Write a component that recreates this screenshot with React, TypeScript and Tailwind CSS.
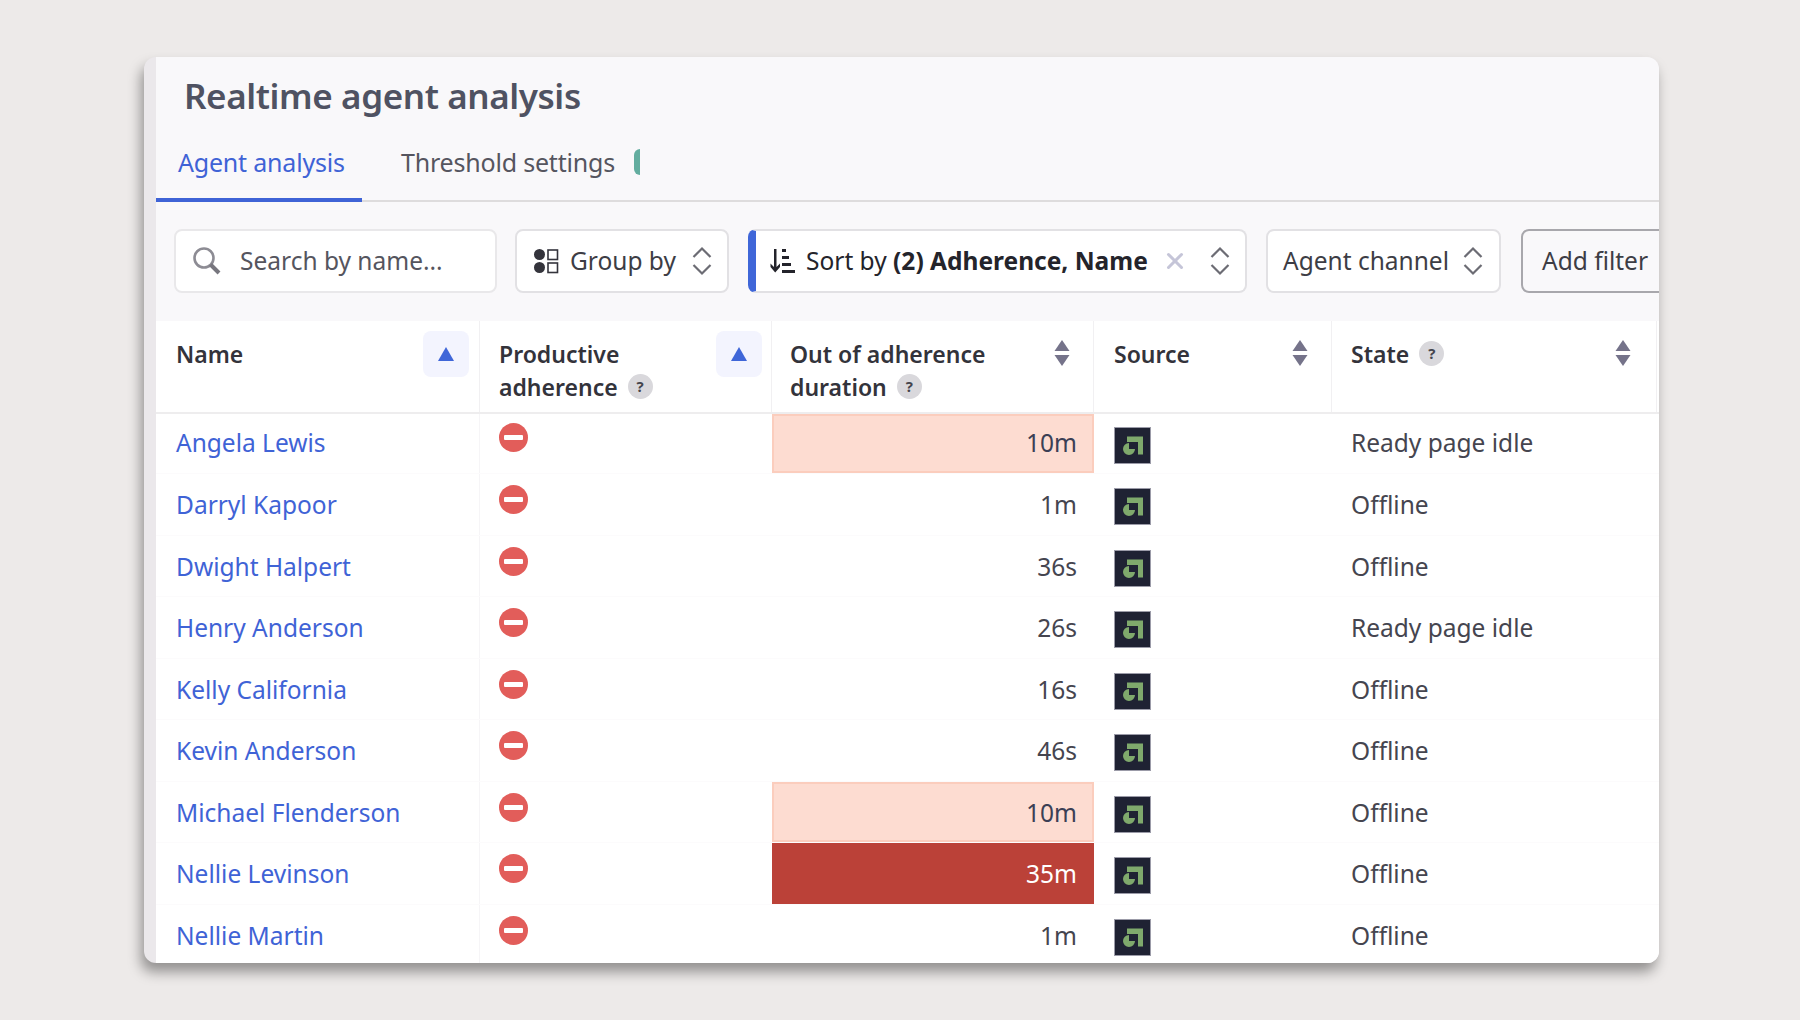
import { X } from "lucide-react";

const rows = [
  { name: "Angela Lewis", time: "10m", state: "Ready page idle", level: "warn" },
  { name: "Darryl Kapoor", time: "1m", state: "Offline", level: "" },
  { name: "Dwight Halpert", time: "36s", state: "Offline", level: "" },
  { name: "Henry Anderson", time: "26s", state: "Ready page idle", level: "" },
  { name: "Kelly California", time: "16s", state: "Offline", level: "" },
  { name: "Kevin Anderson", time: "46s", state: "Offline", level: "" },
  { name: "Michael Flenderson", time: "10m", state: "Offline", level: "warn" },
  { name: "Nellie Levinson", time: "35m", state: "Offline", level: "bad" },
  { name: "Nellie Martin", time: "1m", state: "Offline", level: "" },
];

const Chevrons = () => (
  <svg width="22" height="30" viewBox="0 0 22 30" fill="none" stroke="#6c6c74" strokeWidth="2.2" className="shrink-0">
    <path d="M2.5 11 L11 2.5 L19.5 11" />
    <path d="M2.5 19 L11 27.5 L19.5 19" />
  </svg>
);

const SortArrows = () => (
  <svg width="16" height="28" viewBox="0 0 16 28" fill="#75738a" className="shrink-0 mt-[1px]">
    <path d="M8 1 L15.5 12 H0.5 Z" />
    <path d="M8 27 L15.5 16 H0.5 Z" />
  </svg>
);

const SortActive = () => (
  <div className="w-[46px] h-[46px] rounded-lg bg-[#f3f4fe] flex items-center justify-center shrink-0">
    <svg width="16" height="14" viewBox="0 0 16 14" fill="#3f66d8">
      <path d="M8 0 L16 14 H0 Z" />
    </svg>
  </div>
);

const Help = () => (
  <span className="inline-flex w-[25px] h-[25px] mb-[7px] ml-[4px] rounded-full bg-[#d9d8dc] text-[#45454d] text-[15px] font-bold items-center justify-center align-middle shrink-0">
    ?
  </span>
);

const Blocked = () => (
  <svg width="29" height="29" viewBox="0 0 29 29">
    <circle cx="14.5" cy="14.5" r="14.5" fill="#e25d5a" />
    <rect x="5" y="12" width="19" height="5" rx="1" fill="#fff" />
  </svg>
);

const SourceLogo = () => (
  <svg width="37" height="37" viewBox="0 0 37 37">
    <rect x="0.5" y="0.5" width="36" height="36" fill="#1f2233" stroke="#9b9ba8" />
    <path d="M13 9.5 H29 V27.5 H24 V15 H13 Z" fill="#7fa96c" />
    <path d="M15 16 A6 6 0 1 0 21 22 H15 Z" fill="#7fa96c" />
  </svg>
);

const SearchIcon = () => (
  <svg width="30" height="30" viewBox="0 0 30 30" fill="none" className="shrink-0">
    <circle cx="12" cy="12" r="9.5" stroke="#8d8c94" strokeWidth="2.6" />
    <path d="M18.5 18.5 L27 27" stroke="#77767e" strokeWidth="4" />
  </svg>
);

const GroupIcon = () => (
  <svg width="26" height="26" viewBox="0 0 26 26" className="shrink-0">
    <circle cx="6.5" cy="6.5" r="5.5" fill="#34343c" />
    <circle cx="6.5" cy="19.5" r="5.5" fill="#34343c" />
    <rect x="15" y="2" width="9.5" height="9.5" fill="none" stroke="#34343c" strokeWidth="1.6" />
    <rect x="15" y="15" width="9.5" height="9.5" fill="none" stroke="#34343c" strokeWidth="1.6" />
  </svg>
);

const SortIcon = () => (
  <svg width="26" height="26" viewBox="0 0 26 26" fill="#24242b" className="shrink-0">
    <path d="M5 1 H7.5 V19 L11 15.5 V19 L6.2 24.5 L1.5 19 V15.5 L5 19 Z" />
    <rect x="13" y="1" width="4" height="3" />
    <rect x="13" y="8" width="7" height="3" />
    <rect x="13" y="15" width="9" height="3" />
    <rect x="13" y="22" width="13" height="3" />
  </svg>
);

export default function App() {
  return (
    <div className="w-[1800px] h-[1020px] bg-[#edeae9] pt-[57px] pl-[144px] font-['Noto_Sans',sans-serif] overflow-hidden">
      <div className="w-[1515px] h-[906px] rounded-xl bg-[#ebe8eb] pl-[12px] overflow-hidden shadow-[-3px_9px_13px_rgba(0,0,0,0.38)]">
        <div className="h-full bg-[#f9f8fa] flex flex-col overflow-hidden">
          {/* Title and tabs */}
          <h1 className="pl-[28px] pt-[14px] h-[72px] text-[35px] tracking-[-0.4px] leading-[50px] font-semibold text-[#4f5262]">
            Realtime agent analysis
          </h1>
          <div className="h-[73px] flex border-b-2 border-[#dedcdd] pt-[14px] text-[25px] tracking-[-0.2px]">
            <div className="w-[206px] pl-[22px] leading-[38px] text-[#3f63d6] border-b-4 border-[#3f63d6] h-[59px] mb-[-2px]">
              Agent analysis
            </div>
            <div className="pl-[39px] leading-[38px] text-[#55555f] flex">
              Threshold settings
              <span className="ml-[19px] mt-[6px] w-[6px] h-[26px] bg-[#63ad9f] rounded-l-full" />
            </div>
          </div>

          {/* Filter bar */}
          <div className="h-[119px] pl-[18px] pt-[27px] flex gap-[19px] overflow-hidden text-[24.5px] text-[#3d3d45] shrink-0">
            <div className="w-[323px] h-[64px] -mr-[1px] bg-white border-2 border-[#e9e8ea] rounded-lg flex items-center pl-[16px] gap-[18px] shrink-0">
              <SearchIcon />
              <span className="text-[#55555e]">Search by name...</span>
            </div>
            <div className="w-[214px] h-[64px] bg-white border-2 border-[#e2e1e4] rounded-lg flex items-center pl-[16px] pr-[14px] gap-[11px] shrink-0">
              <GroupIcon />
              <span className="flex-1">Group by</span>
              <Chevrons />
            </div>
            <div className="w-[499px] h-[64px] bg-white border-2 border-[#e2e1e4] border-l-[8px] border-l-[#3f66d8] rounded-lg flex items-center pl-[13px] pr-[14px] gap-[11px] shrink-0 text-[#24242b]">
              <SortIcon />
              <span className="flex-1 whitespace-nowrap">
                Sort by <b className="font-bold">(2) Adherence, Name</b>
              </span>
              <X size={26} color="#c5c5d8" strokeWidth={2.8} className="mr-[10px]" />
              <Chevrons />
            </div>
            <div className="w-[235px] h-[64px] bg-white border-2 border-[#e2e1e4] rounded-lg flex items-center pl-[15px] pr-[15px] shrink-0">
              <span className="flex-1 whitespace-nowrap">Agent channel</span>
              <Chevrons />
            </div>
            <div className="ml-[1px] w-[180px] h-[64px] border-2 border-[#a8a7ac] rounded-lg flex items-center pl-[19px] shrink-0 whitespace-nowrap">
              Add filter
            </div>
          </div>

          {/* Table */}
          <div className="flex-1 bg-white overflow-hidden">
            <div className="h-[93px] grid grid-cols-[324px_292px_322px_238px_325px] border-b-2 border-[#eeedee] text-[23px] leading-[33px] font-semibold text-[#33333b]">
              <div className="pl-[20px] pr-[10px] pt-[17px] flex justify-between border-r border-[#f1f0f2]">
                <span>Name</span>
                <div className="-mt-[7px]"><SortActive /></div>
              </div>
              <div className="pl-[19px] pr-[9px] pt-[17px] flex justify-between border-r border-[#f1f0f2]">
                <span>
                  Productive
                  <br />
                  adherence <Help />
                </span>
                <div className="-mt-[7px]"><SortActive /></div>
              </div>
              <div className="pl-[18px] pr-[23px] pt-[17px] flex justify-between border-r border-[#f1f0f2]">
                <span>
                  Out of adherence
                  <br />
                  duration <Help />
                </span>
                <SortArrows />
              </div>
              <div className="pl-[20px] pr-[23px] pt-[17px] flex justify-between border-r border-[#f1f0f2]">
                <span>Source</span>
                <SortArrows />
              </div>
              <div className="pl-[19px] pr-[25px] pt-[17px] flex justify-between border-r border-[#f1f0f2]">
                <span>
                  State <Help />
                </span>
                <SortArrows />
              </div>
            </div>
            {rows.map((r, i) => (
              <div
                key={r.name}
                className={
                  i === 0
                    ? "h-[60px] grid grid-cols-[324px_292px_322px_238px_325px] text-[24.5px] text-[#45454f] border-b border-[#fcfbfc]"
                    : "h-[61.5px] grid grid-cols-[324px_292px_322px_238px_325px] text-[24.5px] text-[#45454f] border-b border-[#fcfbfc] [&>.cell]:pt-[3px]"
                }
              >
                <div className="cell pl-[20px] flex items-center border-r border-[#f6f5f7] text-[#3f63d6] whitespace-nowrap">
                  {r.name}
                </div>
                <div className={i === 0 ? "pl-[19px] pt-[9px]" : "pl-[19px] pt-[11px]"}>
                  <Blocked />
                </div>
                <div
                  className={
                    r.level === "warn"
                      ? "cell flex items-center justify-end pr-[15px] bg-[#fddcd1] border-2 border-[#fbcdbd] text-[#3b3f55]"
                      : r.level === "bad"
                        ? "cell flex items-center justify-end pr-[17px] bg-[#bb4138] text-white"
                        : "cell flex items-center justify-end pr-[17px]"
                  }
                >
                  {r.time}
                </div>
                <div className={i === 0 ? "pl-[20px] pt-[13px]" : "pl-[20px] pt-[14px]"}>
                  <SourceLogo />
                </div>
                <div className="cell pl-[19px] flex items-center whitespace-nowrap">{r.state}</div>
              </div>
            ))}
          </div>
        </div>
      </div>
    </div>
  );
}
